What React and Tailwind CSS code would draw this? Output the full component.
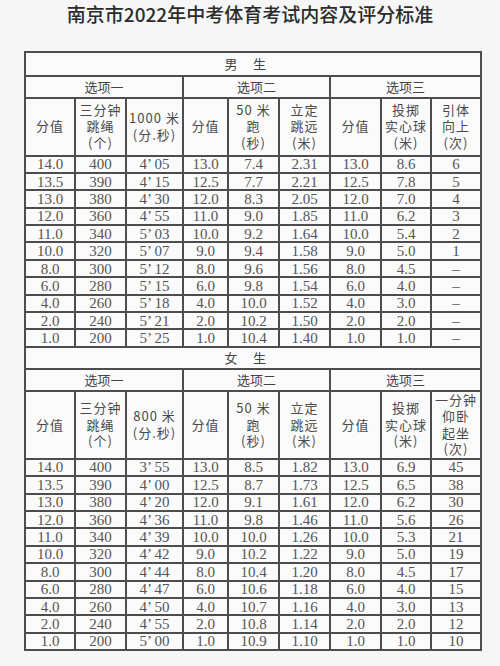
import React from 'react'

const COLS = ['w-[50px]', 'w-[51px]', 'w-[57px]', 'w-[45px]', 'w-[51px]', 'w-[51px]', 'w-[51px]', 'w-[50px]', 'w-[50px]']

const MALE_HEAD = [
  '分值',
  '三分钟\n跳绳\n(个)',
  '1000 米\n(分.秒)',
  '分值',
  '50 米\n跑\n(秒)',
  '立定\n跳远\n(米)',
  '分值',
  '投掷\n实心球\n(米)',
  '引体\n向上\n(次)',
]

const FEMALE_HEAD = [
  '分值',
  '三分钟\n跳绳\n(个)',
  '800 米\n(分.秒)',
  '分值',
  '50 米\n跑\n(秒)',
  '立定\n跳远\n(米)',
  '分值',
  '投掷\n实心球\n(米)',
  '一分钟\n仰卧\n起坐\n(次)',
]

const MALE_ROWS = [
  ['14.0', '400', '4’ 05', '13.0', '7.4', '2.31', '13.0', '8.6', '6'],
  ['13.5', '390', '4’ 15', '12.5', '7.7', '2.21', '12.5', '7.8', '5'],
  ['13.0', '380', '4’ 30', '12.0', '8.3', '2.05', '12.0', '7.0', '4'],
  ['12.0', '360', '4’ 55', '11.0', '9.0', '1.85', '11.0', '6.2', '3'],
  ['11.0', '340', '5’ 03', '10.0', '9.2', '1.64', '10.0', '5.4', '2'],
  ['10.0', '320', '5’ 07', '9.0', '9.4', '1.58', '9.0', '5.0', '1'],
  ['8.0', '300', '5’ 12', '8.0', '9.6', '1.56', '8.0', '4.5', '–'],
  ['6.0', '280', '5’ 15', '6.0', '9.8', '1.54', '6.0', '4.0', '–'],
  ['4.0', '260', '5’ 18', '4.0', '10.0', '1.52', '4.0', '3.0', '–'],
  ['2.0', '240', '5’ 21', '2.0', '10.2', '1.50', '2.0', '2.0', '–'],
  ['1.0', '200', '5’ 25', '1.0', '10.4', '1.40', '1.0', '1.0', '–'],
]

const FEMALE_ROWS = [
  ['14.0', '400', '3’ 55', '13.0', '8.5', '1.82', '13.0', '6.9', '45'],
  ['13.5', '390', '4’ 00', '12.5', '8.7', '1.73', '12.5', '6.5', '38'],
  ['13.0', '380', '4’ 20', '12.0', '9.1', '1.61', '12.0', '6.2', '30'],
  ['12.0', '360', '4’ 36', '11.0', '9.8', '1.46', '11.0', '5.6', '26'],
  ['11.0', '340', '4’ 39', '10.0', '10.0', '1.26', '10.0', '5.3', '21'],
  ['10.0', '320', '4’ 42', '9.0', '10.2', '1.22', '9.0', '5.0', '19'],
  ['8.0', '300', '4’ 44', '8.0', '10.4', '1.20', '8.0', '4.5', '17'],
  ['6.0', '280', '4’ 47', '6.0', '10.6', '1.18', '6.0', '4.0', '15'],
  ['4.0', '260', '4’ 50', '4.0', '10.7', '1.16', '4.0', '3.0', '13'],
  ['2.0', '240', '4’ 55', '2.0', '10.8', '1.14', '2.0', '2.0', '12'],
  ['1.0', '200', '5’ 00', '1.0', '10.9', '1.10', '1.0', '1.0', '10'],
]

const cell = 'border-2 border-[#4d4d4d] p-0 text-center align-middle'
const sans = "font-['Noto_Sans_CJK_SC','Noto_Sans',sans-serif]"

function Section({ label, head, rows, labelRow, optRow, headRow }) {
  return (
    <>
      <tr className={labelRow}>
        <td colSpan={9} className={`${cell} ${sans} text-[13px] tracking-[1.2em] text-[#444]`}>
          {label}
        </td>
      </tr>
      <tr className={optRow}>
        {['选项一', '选项二', '选项三'].map((t) => (
          <td key={t} colSpan={3} className={`${cell} ${sans} text-[13px] text-[#444]`}>
            {t}
          </td>
        ))}
      </tr>
      <tr className={headRow}>
        {head.map((text, i) => (
          <td
            key={i}
            className={`${cell} ${sans} whitespace-pre-line text-[13px] leading-[16.5px] tracking-[1px] text-[#4a4a4a]`}
          >
            {text}
          </td>
        ))}
      </tr>
      {rows.map((r, ri) => (
        <tr key={ri} className="h-[17.4px]">
          {r.map((v, i) => (
            <td key={i} className={`${cell} text-[15px] leading-[14px] text-[#555]`}>
              {v}
            </td>
          ))}
        </tr>
      ))}
    </>
  )
}

export default function App() {
  return (
    <div className="min-h-[666px] w-[500px] bg-[#f6f6f6] font-['Liberation_Serif','Noto_Sans_CJK_SC',serif]">
      <h1 className={`${sans} text-center text-[19px] leading-[28px] font-medium text-[#2b2b2b]`}>
        南京市2022年中考体育考试内容及评分标准
      </h1>
      <div className="pl-[24px] pt-[23px]">
        <table className="w-[456px] table-fixed border-collapse bg-[#fbfbfb]">
          <colgroup>
            {COLS.map((c, i) => (
              <col key={i} className={c} />
            ))}
          </colgroup>
          <tbody>
            <Section
              label="男生"
              head={MALE_HEAD}
              rows={MALE_ROWS}
              labelRow="h-[24px]"
              optRow="h-[21px]"
              headRow="h-[58px]"
            />
            <Section
              label="女生"
              head={FEMALE_HEAD}
              rows={FEMALE_ROWS}
              labelRow="h-[22px]"
              optRow="h-[22px]"
              headRow="h-[66px]"
            />
          </tbody>
        </table>
      </div>
    </div>
  )
}
